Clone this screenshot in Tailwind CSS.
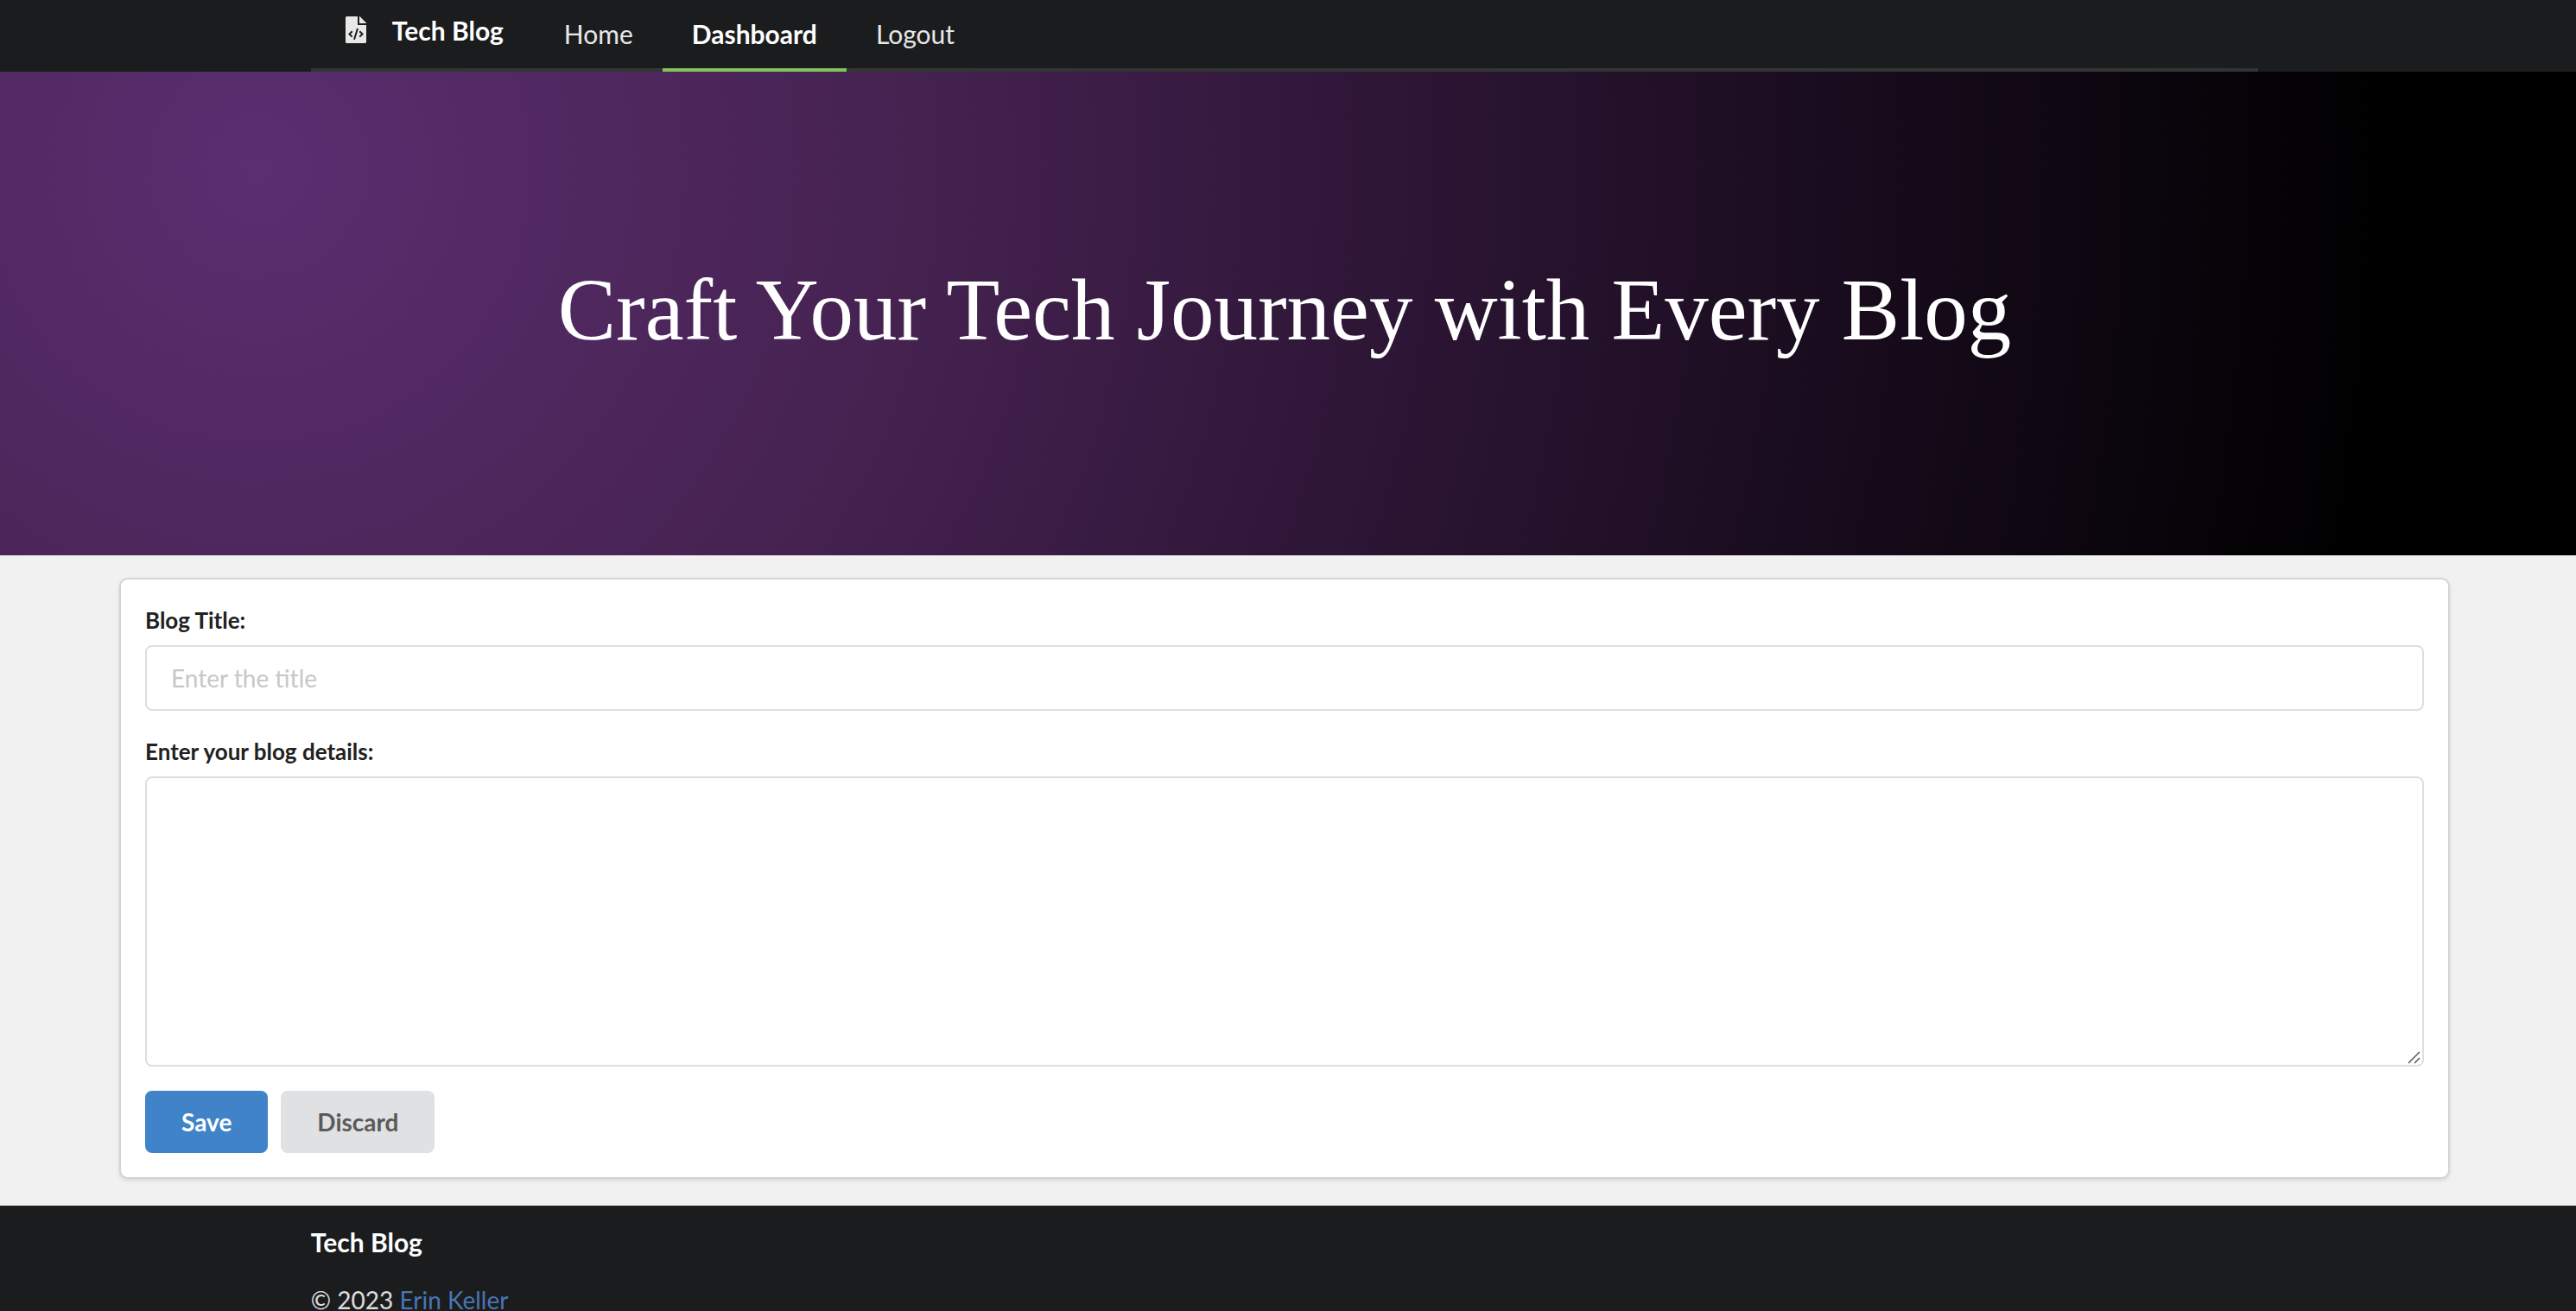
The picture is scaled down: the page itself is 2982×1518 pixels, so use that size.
<!DOCTYPE html>
<html lang="en">
<head>
<meta charset="utf-8">
<title>Tech Blog</title>
<script src="https://cdn.jsdelivr.net/npm/@tailwindcss/browser@4"></script>
</head>
<body class="flex h-screen flex-col overflow-hidden bg-[#f1f1f1] font-['Lato',sans-serif] text-[28px] leading-10 text-[#212121]">
  <header class="bg-[#1b1c1d] pr-2">
    <nav class="mx-auto flex h-[83px] w-[75.8%] border-b-4 border-[#333435] text-[30px] text-white/90">
      <a href="#" class="flex items-start gap-[22px] px-9 pt-[15px] font-bold text-white">
        <svg class="mt-1 h-[31px] w-9" viewBox="0 0 36 31" aria-hidden="true">
          <path fill="#e8e8e8" d="M5.500 0H18v10h10v19.500a1.500 1.500 0 0 1-1.500 1.500h-21a1.500 1.500 0 0 1-1.500-1.500v-28A1.500 1.500 0 0 1 5.500 0zM20 0h.5L28 7.500V8h-8z"/>
          <path fill="none" stroke="#1b1c1d" stroke-width="2" d="M11.700 17.200L8.500 20.400l3.200 3.200M20.300 17.200l3.200 3.200-3.200 3.200M18 14l-4 12.800"/>
        </svg>
        Tech Blog
      </a>
      <a href="#" class="px-[34px] pt-[19px]">Home</a>
      <a href="#" class="-mb-1 border-b-4 border-[#83c35d] px-[34px] pt-[19px] font-bold text-white" aria-current="page">Dashboard</a>
      <a href="#" class="px-[34px] pt-[19px]">Logout</a>
    </nav>
  </header>

  <section class="flex h-[560px] shrink-0 items-center justify-center bg-[radial-gradient(circle_at_10%_20%,#5b2e70_0%,#452250_28%,#301739_46%,#000_91%)] pr-2 pb-2">
    <h1 class="font-['Liberation_Serif',serif] text-[101px] leading-none text-white">Craft Your Tech Journey with Every Blog</h1>
  </section>

  <main class="pr-2">
    <form class="mx-[138px] mt-[26px] mb-[31px] rounded-[10px] border-2 border-[#d4d4d5] bg-white p-7 shadow-[0_2px_4px_rgba(34,36,38,0.12)]">
      <label for="title" class="mt-px mb-[11px] block text-[26px] leading-9 font-bold">Blog Title:</label>
      <input id="title" type="text" placeholder="Enter the title" class="block h-[76px] w-full rounded-lg border-2 border-[#dedede] px-7 placeholder:text-[#c7c7c7]">
      <label for="details" class="mt-[29px] mb-[11px] block text-[26px] leading-9 font-bold">Enter your blog details:</label>
      <div class="relative">
        <textarea id="details" class="block h-[336px] w-full resize-y rounded-lg border-2 border-[#dedede] px-7 py-5"></textarea>
        <svg class="pointer-events-none absolute right-[3px] bottom-[3px] size-4 bg-white" viewBox="0 0 16 16" fill="none" stroke="#555" stroke-width="1.500" aria-hidden="true">
          <path d="M1 15L14 2M8 15l6-6"/>
        </svg>
      </div>
      <div class="mt-7 flex gap-[15px]">
        <button type="submit" class="h-[72px] rounded-lg bg-[#4183c9] px-[42px] font-bold text-white">Save</button>
        <button type="button" class="h-[72px] rounded-lg bg-[#e0e1e2] px-[42px] font-bold text-[#5a5a5a]">Discard</button>
      </div>
    </form>
  </main>

  <footer class="flex-1 bg-[#1b1c1d] pr-2">
    <div class="mx-auto w-[75.8%] pt-[22px] text-white/85">
      <h2 class="text-[30px] font-bold text-white">Tech Blog</h2>
      <p class="mt-[27px]">© 2023 <a href="#" class="text-[#4976b4]">Erin Keller</a></p>
    </div>
  </footer>
</body>
</html>
